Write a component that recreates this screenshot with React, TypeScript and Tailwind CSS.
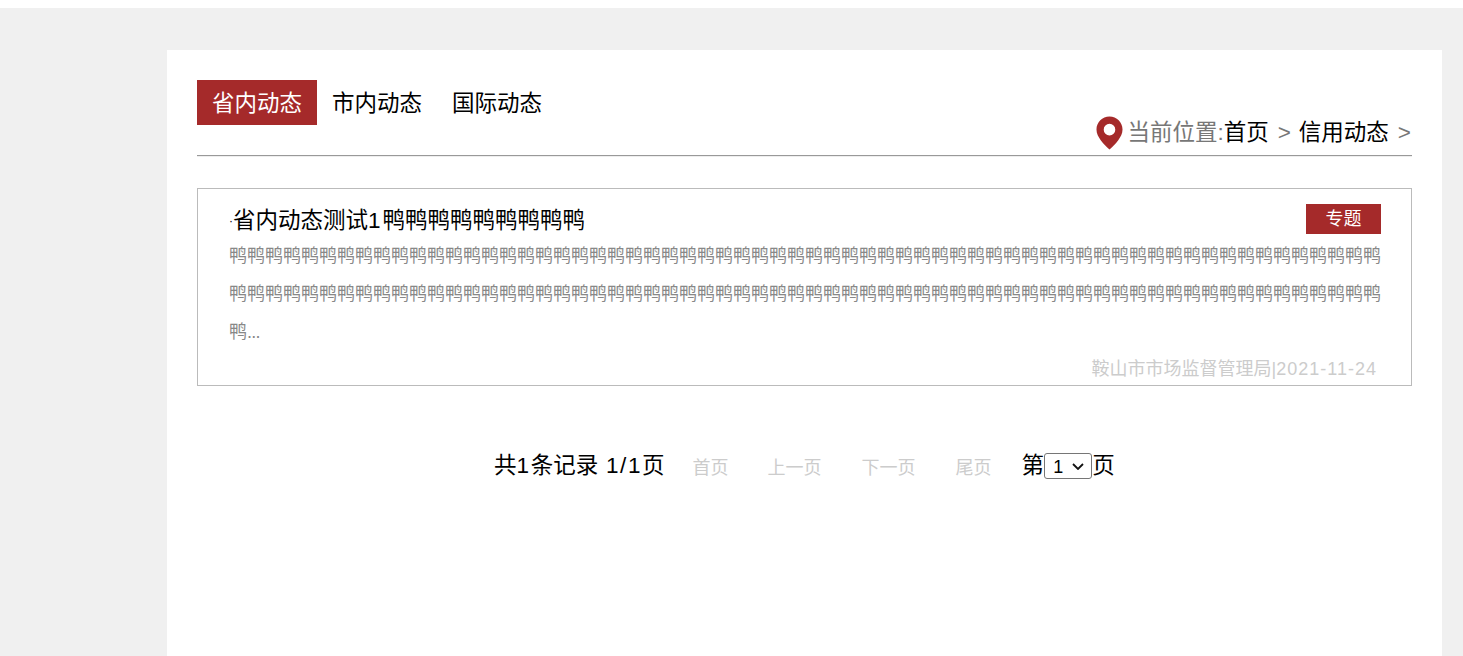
import React from "react";

const font = { fontFamily: '"Liberation Sans", "Noto Sans CJK SC", sans-serif' };

function Pin() {
  return (
    <svg width="27" height="34" viewBox="0 0 28 34" className="block">
      <path
        fillRule="evenodd"
        fill="#a52a2a"
        d="M14 0C6.500 0 .5 6 .5 13.400c0 4.200 2 7.800 4.600 11.300 2.600 3.500 5.800 6.500 8.900 9.300 3.100-2.800 6.300-5.800 8.900-9.300 2.600-3.500 4.600-7.100 4.600-11.300C27.500 6 21.500 0 14 0Zm0 7.500a6 6 0 1 1 0 12 6 6 0 0 1 0-12Z"
      />
    </svg>
  );
}

export default function App() {
  const duck = "鸭".repeat(64);
  return (
    <div className="h-[656px] overflow-hidden bg-white pt-2" style={font}>
      <div className="h-[648px] bg-[#f0f0f0] pt-[42px] pl-[167px] pr-[21px]">
        <div className="h-[606px] bg-white px-[30px] pt-[30px]">
          <div className="flex h-[76px] items-start justify-between border-b border-b-[#999] shadow-[0_1px_0_#eeeeee]">
            <div className="flex">
              <div className="flex h-[45px] w-[120px] items-center justify-center bg-[#a52a2a] pt-[2px] text-[22.5px] text-white">省内动态</div>
              <div className="flex h-[45px] w-[120px] items-center justify-center pt-[2px] text-[22.5px] text-black">市内动态</div>
              <div className="flex h-[45px] w-[120px] items-center justify-center pt-[2px] text-[22.5px] text-black">国际动态</div>
            </div>
            <div className="mt-[36px] flex h-[34px] items-center text-[22.5px] leading-[34px] text-[#777]">
              <Pin />
              <span className="ml-[4px]">当前位置:</span>
              <span className="text-black">首页</span>
              <span className="ml-[9px] mr-[8px] text-[#777]">&gt;</span>
              <span className="text-black">信用动态</span>
              <span className="ml-[9px] text-[#777]">&gt;</span>
              <span className="w-[1px]" />
            </div>
          </div>

          <div className="mt-[32px] h-[198px] border border-[#bbb] pl-[31px] pr-[30px] pt-[15px]">
            <div className="flex h-[30px] items-center justify-between">
              <div className="flex pt-[4px] text-[22.5px] leading-[30px] text-black">
                <span className="w-[4px] text-[12px] leading-[30px]">·</span>
                <span>省内动态测试<span className="tracking-[2px]">1</span>鸭鸭鸭鸭鸭鸭鸭鸭鸭</span>
              </div>
              <div className="flex h-[30px] w-[75px] items-center justify-center bg-[#a52a2a] text-[18px] text-white">专题</div>
            </div>
            <div className="mt-[3px] text-[18px] leading-[38px] text-[#888] [word-break:break-all]">
              {duck}
              <br />
              {duck}
              <br />
              鸭<span className="tracking-[-0.7px]">...</span>
            </div>
            <div className="mt-[1px] pr-[4px] text-right text-[18px] leading-[34px] text-[#ccc]">
              鞍山市市场监督管理局|<span className="tracking-[1px]">2021-11-24</span>
            </div>
          </div>

          <div className="mt-[63px] flex h-[34px] items-center pl-[297px] text-[22.5px] text-black">
            <span>
              共<span className="tracking-[1.6px]">1</span>条记录<span className="tracking-[1.6px]"> 1/1</span>页
            </span>
            <span className="ml-[28px] pt-[4px] text-[18px] text-[#ccc]">首页</span>
            <span className="ml-[39px] pt-[4px] text-[18px] text-[#ccc]">上一页</span>
            <span className="ml-[40px] pt-[4px] text-[18px] text-[#ccc]">下一页</span>
            <span className="ml-[40px] pt-[4px] text-[18px] text-[#ccc]">尾页</span>
            <span className="ml-[30px]">第</span>
            <span className="relative block h-[26px] w-[48px]">
              <select className="block h-[26px] w-[48px] appearance-none rounded-[3px] border border-[#767676] bg-white pl-[8px] text-[18px] text-black" defaultValue="1">
                <option value="1">1</option>
              </select>
              <svg className="pointer-events-none absolute left-[28px] top-[10px]" width="12" height="7" viewBox="0 0 12 7" fill="none">
                <path d="M1 1l5 5 5-5" stroke="#111" strokeWidth="1.800" />
              </svg>
            </span>
            <span>页</span>
          </div>
        </div>
      </div>
    </div>
  );
}
